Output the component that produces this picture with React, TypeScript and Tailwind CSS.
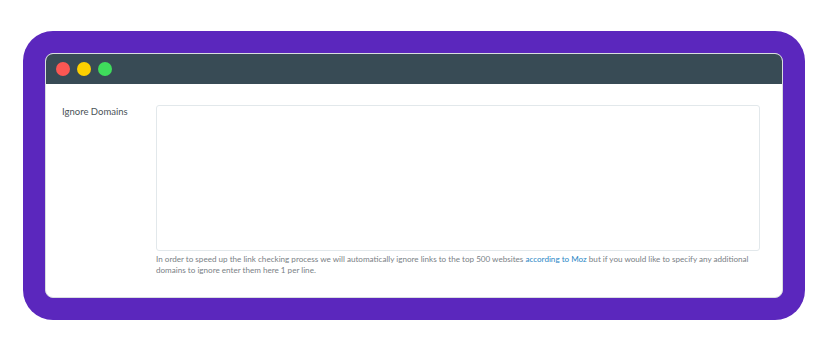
const dots = ["bg-[#fc5753]", "bg-[#fdd000]", "bg-[#3fdc5c]"];

export default function App() {
  return (
    <div className="h-[350px] w-[827px] bg-white pl-[23px] pt-[31px] font-['Lato','Open_Sans',sans-serif]">
      <div className="h-[289px] w-[782px] rounded-[30px] bg-[#5b27bd] p-[22px]">
        <div className="flex h-full flex-col overflow-hidden rounded-[8px] border border-[#d9dde0] bg-white">
          <div className="flex h-[30px] shrink-0 items-center gap-[7px] bg-[#384b55] pl-[10px]">
            {dots.map((c) => (
              <span key={c} className={`h-[14px] w-[14px] rounded-full ${c}`} />
            ))}
          </div>

          <div className="flex pl-[16px] pr-[22px] pt-[21px]">
            <label className="w-[94px] shrink-0 pt-[1px] text-[9.5px] leading-[12px] text-[#4b5358]">
              Ignore Domains
            </label>
            <div className="flex-1">
              <textarea className="block h-[146px] w-full resize-none rounded-[3px] border border-[#e2e8eb] bg-white outline-none" />
              <p className="mt-[3px] text-[8.1px] leading-[11px] text-[#7a8186]">
                In order to speed up the link checking process we will automatically ignore links to the top 500
                websites <span className="text-[#2a87c6]">according to Moz</span> but if you would like to specify
                any additional domains to ignore enter them here 1 per line.
              </p>
            </div>
          </div>
        </div>
      </div>
    </div>
  );
}
